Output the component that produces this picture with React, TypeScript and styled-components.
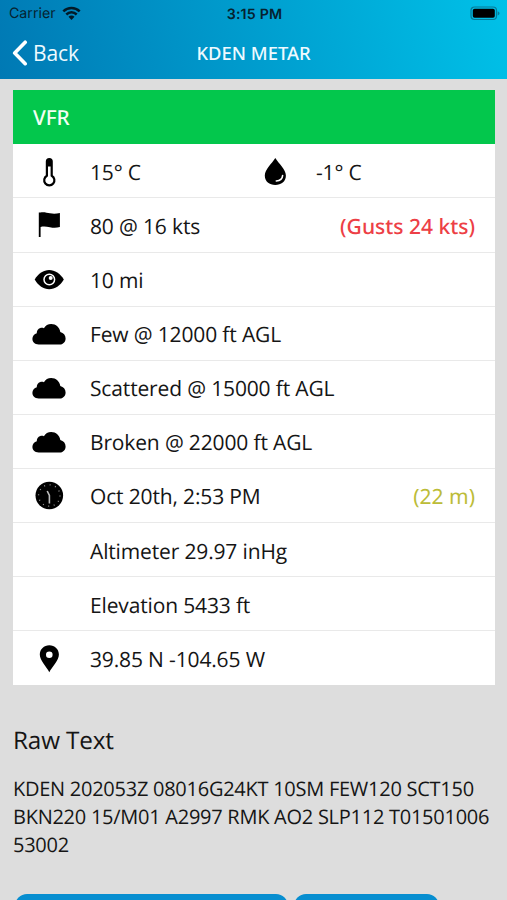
import React from "react";
import styled, { createGlobalStyle } from "styled-components";

const Global = createGlobalStyle`
  * { box-sizing: border-box; }
  body { margin: 0; background: #dddddd; overflow: hidden; }
`;

const Screen = styled.div`
  width: 507px;
  height: 900px;
  overflow: hidden;
  background: #dddddd;
  color: #151515;
  font-family: "Open Sans", sans-serif;
  text-rendering: geometricPrecision;
`;

const Top = styled.header`
  height: 79px;
  background: linear-gradient(76deg, #0079b4 0%, #00c1e8 100%);
`;

const StatusBar = styled.div`
  height: 27px;
  padding: 0 7px 0 9px;
  display: grid;
  grid-template-columns: 1fr auto 1fr;
  align-items: center;
  font-family: Inter, sans-serif;
  font-size: 14.2px;
  color: #06222f;
`;

const Carrier = styled.div`
  display: flex;
  align-items: center;
  gap: 6px;
`;

const Time = styled.div`
  font-weight: 600;
  letter-spacing: 0.2px;
  padding-top: 1px;
`;

const Battery = styled.svg`
  justify-self: end;
  display: block;
`;

const NavBar = styled.nav`
  height: 52px;
  padding: 0 12px;
  display: grid;
  grid-template-columns: 1fr auto 1fr;
  align-items: center;
  color: #eefaff;
`;

const Back = styled.button`
  display: flex;
  align-items: center;
  gap: 5px;
  padding: 0;
  border: 0;
  background: none;
  color: inherit;
  font: 400 21px/28px "Open Sans", sans-serif;
  letter-spacing: -0.1px;
`;

const Title = styled.h1`
  margin: 1px 0 0;
  font-family: "Noto Sans", sans-serif;
  font-size: 18.4px;
  line-height: 28px;
  font-weight: 500;
`;

const Card = styled.section`
  margin: 11px 12px 0 13px;
  height: 595px;
  display: grid;
  grid-template-columns: minmax(0, 1fr);
  grid-template-rows: 54.4px repeat(10, 1fr);
  background: #fff;
  font-size: 21px;
  letter-spacing: -0.15px;
  line-height: 28px;
`;

const Category = styled.div`
  display: flex;
  align-items: center;
  padding: 2px 20px 0;
  background: #03c74c;
  color: #f4fff4;
  font-family: "Noto Sans", sans-serif;
  font-size: 20.8px;
  font-weight: 500;
`;

const Row = styled.div<{ $last?: boolean }>`
  display: flex;
  align-items: center;
  padding: 4.4px 20px 0 18px;
  border-bottom: ${(p) => (p.$last ? "0" : "1px solid #e9e9e9")};
`;

const IconCell = styled.div`
  width: 36px;
  height: 36px;
  margin: -2.4px 23px 0 0;
  flex: none;
  svg { display: block; }
`;

const Value = styled.span`
  flex: 1;
  white-space: nowrap;
`;

const Note = styled.span<{ $tone: string; $strong?: boolean }>`
  color: ${(p) => p.$tone};
  font-family: "Noto Sans", sans-serif;
  font-weight: ${(p) => (p.$strong ? 500 : 400)};
  letter-spacing: 0;
  white-space: nowrap;
`;

const Half = styled.div`
  flex: 1;
  min-width: 0;
  display: flex;
  align-items: center;
  &:first-child { flex: 0 0 226px; }
`;

const Raw = styled.section`
  padding: 0 13px;
`;

const RawTitle = styled.h2`
  margin: 39px 0 17px;
  font-size: 24.3px;
  line-height: 34px;
  font-weight: 400;
  letter-spacing: -0.15px;
`;

const RawText = styled.p`
  margin: 0;
  font-size: 20px;
  letter-spacing: -0.26px;
  line-height: 28px;
  white-space: nowrap;
`;

const Actions = styled.div`
  display: flex;
  gap: 6px;
  margin: 35px 0 0 15px;
`;

const Action = styled.button<{ $width: number }>`
  width: ${(p) => p.$width}px;
  height: 46px;
  border: 0;
  border-radius: 12px;
  background: #078ed0;
`;

const icons = {
  thermometer: (
    <>
      <path d="M15.9 21.7V7.4a2.4 2.4 0 0 1 4.8 0v14.3a5.1 5.1 0 1 1-4.8 0z" fill="#fff" stroke="#000" strokeWidth="2.2" />
      <path d="M15.9 12.500V7.400a2.400 2.400 0 0 1 4.800 0v5.100z" fill="#000" />
    </>
  ),
  drop: (
    <>
      <path d="M18.300 4C15 9.500 7.800 15.500 7.800 21.500c0 6 4.600 9.500 10.500 9.500s10.600-3.500 10.600-9.500C28.900 15.500 21.600 9.500 18.300 4z" />
      <path d="M25.600 21.500c-.2 3.200-2.300 5.200-6.300 5.500" fill="none" stroke="#fff" strokeWidth="1.600" strokeLinecap="round" />
    </>
  ),
  flag: (
    <path d="M7.800 4.600h1.600c3-.9 6.500.2 9.600.7 3.600.6 6.500.4 9.900-.3v14.100c-3.700.8-6.500.8-10 .1-3.400-.7-6.300-1-9.300-.3v10.200H7.800z" />
  ),
  eye: (
    <>
      <path d="M3.700 17.500C7.400 11.500 12.500 8 18.200 8s10.900 3.500 14.600 9.500C29.100 23.700 24 27.200 18.200 27.200S7.400 23.700 3.700 17.500z" />
      <circle cx="18.300" cy="17.500" r="5.300" fill="none" stroke="#fff" strokeWidth="1.500" />
      <circle cx="19.700" cy="16" r="2" fill="#fff" />
    </>
  ),
  cloud: (
    <path d="M7.700 28.500c-4 0-6.300-2.600-6.300-5.700 0-2.800 1.900-5 4.400-5.600-.1-4 3.700-6.400 7.100-5 1.500-2.500 4.100-4.100 7.300-4.100 4.800 0 8.400 3.400 9.100 8 3.200.8 5.300 3.300 5.300 6.300 0 3.400-2.600 6.100-6.100 6.100z" />
  ),
  clock: (
    <>
      <circle cx="18.300" cy="17.500" r="13.800" />
      <circle cx="18.300" cy="17.500" r="10.700" fill="none" stroke="#999" strokeWidth="1.300" strokeDasharray="1 4.602" />
      <path d="M16.200 13l2.200 4.500v8" fill="none" stroke="#bbb" strokeWidth="1.600" />
    </>
  ),
  pin: (
    <path fillRule="evenodd" d="M18.300 4.300c-5.300 0-9.500 4-9.500 9.300 0 6.100 6.700 12.200 9.500 17.700 2.900-5.500 9.600-11.600 9.600-17.700 0-5.300-4.200-9.300-9.600-9.300zm0 6.200a3.300 3.300 0 1 1 0 6.600 3.300 3.300 0 0 1 0-6.600z" />
  ),
};

function Icon({ name }: { name?: keyof typeof icons }) {
  return (
    <IconCell>
      {name && <svg width="36" height="36" viewBox="0 0 36 36">{icons[name]}</svg>}
    </IconCell>
  );
}

type Reading = { icon?: keyof typeof icons; text: string; note?: string; tone?: string; strong?: boolean };

const readings: Reading[] = [
  { icon: "flag", text: "80 @ 16 kts", note: "(Gusts 24 kts)", tone: "#ed3f46", strong: true },
  { icon: "eye", text: "10 mi" },
  { icon: "cloud", text: "Few @ 12000 ft AGL" },
  { icon: "cloud", text: "Scattered @ 15000 ft AGL" },
  { icon: "cloud", text: "Broken @ 22000 ft AGL" },
  { icon: "clock", text: "Oct 20th, 2:53 PM", note: "(22 m)", tone: "#bcbc38" },
  { text: "Altimeter 29.97 inHg" },
  { text: "Elevation 5433 ft" },
  { icon: "pin", text: "39.85 N -104.65 W" },
];

export default function App() {
  return (
    <Screen>
      <Global />
      <Top>
        <StatusBar>
          <Carrier>
            Carrier
            <svg width="19" height="15" viewBox="0 0 19 15" fill="none" stroke="#021a27" strokeWidth="2.500">
              <path d="M1.300 5.300c4.700-4.500 11.700-4.500 16.400 0M4.300 8.500c3-2.900 7.400-2.900 10.400 0" />
              <path d="M6.500 10.800c1.800-1.600 4.200-1.600 6 0l-3 3.100z" fill="#021a27" stroke="none" />
            </svg>
          </Carrier>
          <Time>3:15 PM</Time>
          <Battery width="30" height="15" viewBox="0 0 30 15">
            <rect x="1" y="1" width="25.500" height="12.500" rx="3.500" fill="none" stroke="#067b98" strokeWidth="1.200" />
            <rect x="2.800" y="2.800" width="22" height="9" rx="1.800" />
            <path d="M27.700 5.200c2.400.8 2.400 3.400 0 4.200z" fill="#067b98" />
          </Battery>
        </StatusBar>
        <NavBar>
          <Back>
            <svg width="16" height="26" viewBox="0 0 16 26" fill="none" stroke="#fff" strokeWidth="3.600" strokeLinecap="round" strokeLinejoin="round">
              <path d="M13.200 2.200L2.700 13l10.500 10.700" />
            </svg>
            Back
          </Back>
          <Title>KDEN METAR</Title>
        </NavBar>
      </Top>
      <Card>
        <Category>VFR</Category>
        <Row>
          <Half>
            <Icon name="thermometer" />
            <Value>15° C</Value>
          </Half>
          <Half>
            <Icon name="drop" />
            <Value>-1° C</Value>
          </Half>
        </Row>
        {readings.map((r, i) => (
          <Row key={r.text} $last={i === readings.length - 1}>
            <Icon name={r.icon} />
            <Value>{r.text}</Value>
            {r.note && <Note $tone={r.tone ?? "#151515"} $strong={r.strong}>{r.note}</Note>}
          </Row>
        ))}
      </Card>
      <Raw>
        <RawTitle>Raw Text</RawTitle>
        <RawText>
          KDEN 202053Z 08016G24KT 10SM FEW120 SCT150<br />
          BKN220 15/M01 A2997 RMK AO2 SLP112 T01501006<br />
          53002
        </RawText>
      </Raw>
      <Actions>
        <Action $width={273} aria-label="Refresh" />
        <Action $width={145} aria-label="Share" />
      </Actions>
    </Screen>
  );
}
